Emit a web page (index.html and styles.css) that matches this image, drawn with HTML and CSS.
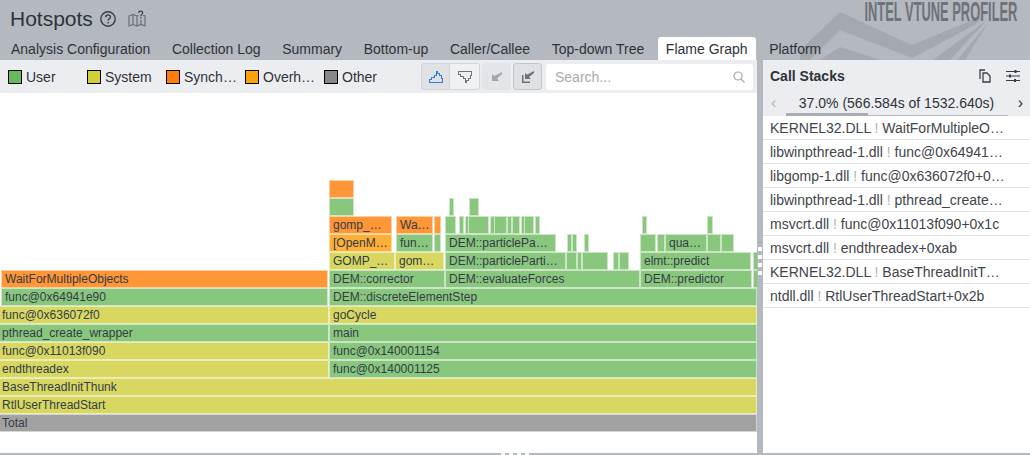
FILE: index.html
```html
<!DOCTYPE html>
<html lang="en">
<head>
    <meta charset="UTF-8">
    <title>Hotspots - Flame Graph</title>
    <link rel="stylesheet" href="styles.css">
</head>
<body>
<div id="header">
    <svg class="logo-bg" width="230" height="60" viewBox="0 0 230 60">
        <polygon fill="#a4a8af" points="-10,60 40,12 112,45 185,15 175,25 112,58 40,30 10,60"/>
        <polygon fill="#a4a8af" points="20,60 40,47 80,60"/>
        <polygon fill="#a4a8af" points="133,60 187,20 150,60"/>
        <polygon fill="#a4a8af" points="157,60 188,23 165,60"/>
    </svg>
    <div class="logo-text">INTEL VTUNE PROFILER</div>
    <div id="title">
        <h1>Hotspots</h1>
        <svg class="title-icon" width="18" height="18" viewBox="0 0 18 18" fill="none" stroke="#3a3d42" stroke-width="1.4">
            <circle cx="9" cy="9" r="7.2"/>
            <path d="M6.8 7.2c0-3 4.6-3 4.6-.2 0 1.700-2.300 1.700-2.300 3.500"/>
            <path d="M9.100 12v1.500"/>
        </svg>
        <svg class="title-icon" width="18" height="18" viewBox="0 0 18 18" fill="none" stroke="#6b7078" stroke-width="1.200">
            <path d="M1 6l4-1.500v10L1 16z"/>
            <path d="M5 4.500l4 1.500v10l-4-1.500"/>
            <path d="M9 16l4-1.500 4 1.500V6l-2-.7M9 6l1.500-.5M13 10v4.500"/>
            <path stroke="#3a3d42" d="M10.700 3c0-2.600 4-2.400 4-.2 0 1.600-1.900 1.500-1.900 3.400M12.800 7.200v1.400"/>
        </svg>
    </div>
    <ul id="tabs">
        <li>Analysis Configuration</li>
        <li>Collection Log</li>
        <li>Summary</li>
        <li>Bottom-up</li>
        <li>Caller/Callee</li>
        <li>Top-down Tree</li>
        <li class="selected">Flame Graph</li>
        <li>Platform</li>
    </ul>
</div>
<div id="main">
    <div id="left">
        <div id="toolbar">
            <ul id="legend">
                <li><i class="swatch user"></i>User</li>
                <li><i class="swatch system"></i>System</li>
                <li><i class="swatch synch"></i>Synch…</li>
                <li><i class="swatch overhead"></i>Overh…</li>
                <li><i class="swatch other"></i>Other</li>
            </ul>
            <div class="btn-group">
                <span class="btn on">
                    <svg width="14" height="12" viewBox="0 0 14 12" fill="none" stroke="#2f80cf" stroke-width="1" shape-rendering="crispEdges">
                        <path d="M.5 11.500h13V7.500h-1V4.500h-2V2.500h-2V.5h-1V4.500h-2v2h-3v2h-2z"/>
                    </svg>
                </span>
                <span class="btn">
                    <svg width="14" height="12" viewBox="0 0 14 12" fill="none" stroke="#70757c" stroke-width="1" shape-rendering="crispEdges">
                        <path d="M.5.5h13V4.500h-1V7.500h-2v2h-2v2h-1V7.500h-2v-2h-3v-2h-2z"/>
                    </svg>
                </span>
            </div>
            <span class="btn single off">
                <svg width="12" height="11" viewBox="0 0 12 11" fill="#a2a5aa">
                    <path d="M1 10V3l2.500 2L11 1v2L6 7.500 8 10z"/>
                </svg>
            </span>
            <span class="btn single">
                <svg width="14" height="12" viewBox="0 0 14 12" fill="#6c7076">
                    <path d="M4 8V2l2 1.700L13 0v2L8 6l2 2z"/>
                    <path d="M1 4v8h8v-1.500H2.500V4z"/>
                </svg>
            </span>
            <div id="search">
                <span>Search...</span>
                <svg width="12" height="12" viewBox="0 0 12 12" fill="none" stroke="#a5a8ad" stroke-width="1.200">
                    <circle cx="5" cy="5" r="4"/>
                    <path d="M8 8l3.500 3.500"/>
                </svg>
            </div>
        </div>
        <div id="flame"></div>
    </div>
    <div id="splitter"><i></i><i></i><i></i><i></i></div>
    <div id="right">
        <div class="stack-head">
            <b>Call Stacks</b>
            <svg width="14" height="14" viewBox="0 0 14 14" fill="none" stroke="#3a3d42" stroke-width="1.300">
                <path d="M2 10V1h5"/>
                <path d="M5 4h4l3 3v6H5z"/>
            </svg>
            <svg width="16" height="14" viewBox="0 0 16 14" fill="none" stroke="#3a3d42" stroke-width="1.100">
                <path d="M1 2.500h14M1 7h14M1 11.500h14"/>
                <path stroke-width="2" d="M10.500 1v3M5 5.500v3M10 10v3"/>
            </svg>
        </div>
        <div class="stack-nav">
            <span class="prev">&lsaquo;</span>
            <span class="percent">37.0% (566.584s of 1532.640s)</span>
            <span class="next">&rsaquo;</span>
            <div class="progress"><div class="fill"></div></div>
        </div>
        <ul id="stack">
            <li>KERNEL32.DLL <em>!</em> WaitForMultipleO…</li>
            <li>libwinpthread-1.dll <em>!</em> func@0x64941…</li>
            <li>libgomp-1.dll <em>!</em> func@0x636072f0+0…</li>
            <li>libwinpthread-1.dll <em>!</em> pthread_create…</li>
            <li>msvcrt.dll <em>!</em> func@0x11013f090+0x1c</li>
            <li>msvcrt.dll <em>!</em> endthreadex+0xab</li>
            <li>KERNEL32.DLL <em>!</em> BaseThreadInitT…</li>
            <li>ntdll.dll <em>!</em> RtlUserThreadStart+0x2b</li>
        </ul>
    </div>
</div>
<div id="bottom-bar"><i></i><i></i><i></i><i></i></div>
<script src="flame.js"></script>
</body>
</html>
```
FILE: styles.css
```css
*{
    margin: 0;
    padding: 0;
    box-sizing: border-box;
}
ul,ol{
    list-style: none;
}
html,body{
    height: 100%;
    overflow: hidden;
}
body{
    font-family: "Liberation Sans", Arial, sans-serif;
    font-size: 14px;
    color: #2f3338;
    background-color: #ffffff;
    display: flex;
    flex-direction: column;
}
#header{
    height: 60px;
    background-color: #b4b8bf;
    position: relative;
    overflow: hidden;
    flex: none;
}
.logo-bg{
    position: absolute;
    right: 0;
    top: 0;
}
.logo-text{
    position: absolute;
    right: 13px;
    top: 0;
    font-size: 28px;
    line-height: 32px;
    height: 32px;
    margin-top: -4px;
    font-weight: bold;
    white-space: nowrap;
    color: #6e7279;
    transform: scaleX(.46);
    transform-origin: right top;
}
#title{
    height: 37px;
    padding-left: 10px;
    display: flex;
    align-items: center;
    position: relative;
}
#title h1{
    font-size: 21px;
    font-weight: normal;
    margin-right: 6px;
}
.title-icon{
    margin-right: 11px;
}
#tabs{
    display: flex;
    gap: 5.6px;
    height: 23px;
    padding-left: 3px;
    position: relative;
}
#tabs li{
    padding: 0 8px;
    line-height: 25px;
    white-space: nowrap;
}
#tabs .selected{
    background-color: #ffffff;
    border-radius: 3px 3px 0 0;
}
#main{
    flex: 1;
    display: flex;
    min-height: 0;
}
#left{
    width: 757px;
    display: flex;
    flex-direction: column;
    flex: none;
}
#toolbar{
    height: 33px;
    background-color: #ebedf0;
    display: flex;
    align-items: center;
    padding-right: 4px;
    flex: none;
}
#legend{
    display: flex;
    width: 421px;
    padding-left: 8px;
}
#legend li{
    width: 79px;
    display: flex;
    align-items: center;
    white-space: nowrap;
}
.swatch{
    width: 14px;
    height: 14px;
    border: 1px solid #000000;
    margin-right: 4px;
}
.user{
    background-color: #69b85e;
}
.system{
    background-color: #cfcf38;
}
.synch{
    background-color: #ff7d0a;
}
.overhead{
    background-color: #fca106;
}
.other{
    background-color: #888888;
}
.btn-group{
    display: flex;
    margin-right: 2px;
}
.btn{
    width: 29px;
    height: 27px;
    border: 1px solid #d2d4d8;
    background-color: #f0f1f3;
    display: flex;
    align-items: center;
    justify-content: center;
}
.btn-group .btn:first-child{
    border-radius: 3px 0 0 3px;
    background-color: #dfe1e5;
}
.btn-group .btn:last-child{
    width: 30px;
    border-left: 0;
    border-radius: 0 3px 3px 0;
}
.single{
    border-radius: 3px;
    margin-right: 2px;
    background-color: #dfe1e5;
    border-color: #c4c6ca;
}
.off{
    background-color: #e4e5e8;
    border-color: #e4e5e8;
}
#search{
    flex: 1;
    height: 26px;
    margin-left: 2px;
    background-color: #ffffff;
    border-radius: 3px;
    display: flex;
    align-items: center;
    justify-content: space-between;
    padding: 0 8px 0 9px;
    color: #a9abaf;
}
#flame{
    flex: 1;
    position: relative;
    overflow: hidden;
    background-color: #ffffff;
}
.frame{
    position: absolute;
    height: 18px;
    border: 1px solid rgba(255,255,255,.55);
    padding: 0 0 0 3px;
    font-size: 12px;
    line-height: 16px;
    color: #333c46;
    white-space: nowrap;
    overflow: hidden;
}
.green{
    background-color: #8ac77e;
}
.yellow{
    background-color: #d8d762;
}
.orange{
    background-color: #ff9637;
}
.amber{
    background-color: #fdb035;
}
.grey{
    background-color: #a2a2a2;
}
#splitter{
    width: 6px;
    background-color: #b4b8bf;
    display: flex;
    flex-direction: column;
    align-items: center;
    gap: 4px;
    padding-top: 187px;
    flex: none;
}
#splitter i,#bottom-bar i{
    width: 4px;
    height: 4px;
    background-color: #ffffff;
}
#right{
    flex: 1;
    display: flex;
    flex-direction: column;
}
.stack-head{
    height: 32px;
    background-color: #ebedf0;
    display: flex;
    align-items: center;
    padding: 0 9px 0 7px;
}
.stack-head b{
    flex: 1;
    font-size: 14px;
}
.stack-head svg{
    margin-left: 13px;
}
.stack-nav{
    height: 24px;
    background-color: #ebedf0;
    position: relative;
    text-align: center;
    line-height: 23px;
}
.prev,.next{
    position: absolute;
    top: -1px;
    font-size: 16px;
}
.prev{
    left: 8px;
    color: #b6b8bc;
}
.next{
    right: 7px;
}
.progress{
    position: absolute;
    left: 23px;
    right: 22px;
    bottom: 0;
    height: 3px;
    border-bottom: 1px solid #b4b8bf;
}
.fill{
    width: 82px;
    height: 3px;
    background-color: #a9adb4;
}
#stack li{
    height: 24px;
    line-height: 25px;
    padding-left: 7px;
    border-bottom: 1px solid #e2e3e5;
    white-space: nowrap;
    overflow: hidden;
    color: #3f454c;
}
#stack em{
    font-style: normal;
    color: #b0b3b8;
}
#bottom-bar{
    height: 2px;
    background-color: #b4b8bf;
    display: flex;
    justify-content: center;
    gap: 4px;
    flex: none;
}
```
FILE: flame.js
```js
(function () {
    var oFlame = document.getElementById("flame");
    var iTop = 93;
    // y of the row, left, right, colour, label
    var aFrames = [
        [180,329,354,"orange",""],
        [198,329,354,"green",""],
        [198,449,453,"green",""],
        [198,469,479,"green",""],

        [216,329,392,"orange","gomp_…"],
        [216,396,433,"orange","Wa…"],
        [216,434,441,"orange",""],
        [216,445,456,"green",""],
        [216,459,464,"green",""],
        [216,465,468,"green",""],
        [216,468,489,"green",""],
        [216,490,493,"green",""],
        [216,494,507,"green",""],
        [216,507,511,"green",""],
        [216,512,520,"green",""],
        [216,521,524,"green",""],
        [216,524,534,"green",""],
        [216,535,538,"green",""],
        [216,642,645,"green",""],
        [216,707,713,"green",""],

        [234,329,392,"amber","[OpenM…"],
        [234,396,433,"green","fun…"],
        [234,434,441,"green",""],
        [234,445,556,"green","DEM::particlePa…"],
        [234,567,572,"green",""],
        [234,572,575,"green",""],
        [234,584,589,"green",""],
        [234,640,656,"green",""],
        [234,657,665,"green",""],
        [234,665,707,"green","qua…"],
        [234,707,721,"green",""],
        [234,721,734,"green",""],

        [252,329,395,"yellow","GOMP_…"],
        [252,395,444,"yellow","gom…"],
        [252,445,566,"green","DEM::particleParti…"],
        [252,566,577,"green",""],
        [252,577,582,"green",""],
        [252,582,608,"green",""],
        [252,613,619,"green",""],
        [252,619,629,"green",""],
        [252,640,751,"green","elmt::predict"],
        [252,753,757,"green",""],

        [270,1,328,"orange","WaitForMultipleObjects"],
        [270,329,445,"green","DEM::corrector"],
        [270,445,640,"green","DEM::evaluateForces"],
        [270,640,752,"green","DEM::predictor"],
        [270,753,757,"green",""],

        [288,1,328,"green","func@0x64941e90"],
        [288,329,757,"green","DEM::discreteElementStep"],
        [306,-2,329,"yellow","func@0x636072f0"],
        [306,329,757,"yellow","goCycle"],
        [324,-2,329,"green","pthread_create_wrapper"],
        [324,329,757,"green","main"],
        [342,-2,329,"yellow","func@0x11013f090"],
        [342,329,757,"green","func@0x140001154"],
        [360,-2,329,"yellow","endthreadex"],
        [360,329,757,"green","func@0x140001125"],
        [378,-2,757,"yellow","BaseThreadInitThunk"],
        [396,-2,757,"yellow","RtlUserThreadStart"],
        [414,-2,757,"grey","Total"]
    ];
    for(var i=0;i<aFrames.length;i++){
        var oFrame = document.createElement("div");
        oFrame.className = "frame " + aFrames[i][3];
        oFrame.style.top = (aFrames[i][0] - iTop) + "px";
        oFrame.style.left = aFrames[i][1] + "px";
        oFrame.style.width = (aFrames[i][2] - aFrames[i][1]) + "px";
        oFrame.textContent = aFrames[i][4];
        oFlame.appendChild(oFrame);
    }
})();
```
